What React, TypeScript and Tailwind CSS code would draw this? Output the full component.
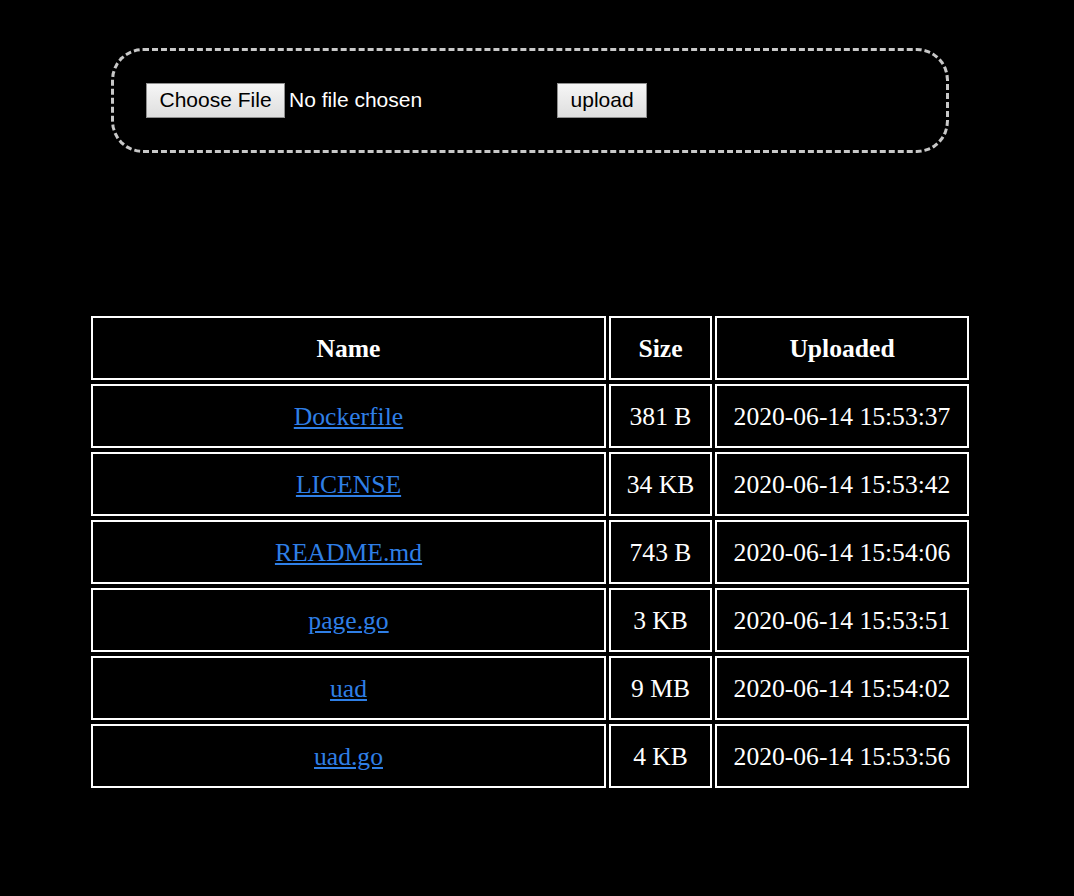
import React from "react";

type FileRow = { name: string; size: string; uploaded: string };

const files: FileRow[] = [
  { name: "Dockerfile", size: "381 B", uploaded: "2020-06-14 15:53:37" },
  { name: "LICENSE", size: "34 KB", uploaded: "2020-06-14 15:53:42" },
  { name: "README.md", size: "743 B", uploaded: "2020-06-14 15:54:06" },
  { name: "page.go", size: "3 KB", uploaded: "2020-06-14 15:53:51" },
  { name: "uad", size: "9 MB", uploaded: "2020-06-14 15:54:02" },
  { name: "uad.go", size: "4 KB", uploaded: "2020-06-14 15:53:56" },
];

const cell =
  "border-2 border-white pt-[16px] pb-[14px] px-0 text-center leading-[30px] align-middle";

const btn =
  "h-[35px] border border-[#8f8f8f] bg-gradient-to-b from-[#f6f6f6] to-[#dedede] px-[12.5px] pb-[2px] text-[21px] leading-[30px] text-black";

export default function App() {
  return (
    <div className="min-h-[896px] bg-black text-white">
      {/* UPLOAD */}
      <div className="pt-[48px] pl-[111px]">
        <form
          className="flex w-[838px] items-center rounded-[32px] border-[3px] border-dashed border-[#c8c8c8] p-[32px]"
          style={{ fontFamily: '"Liberation Sans", Arial, sans-serif' }}
        >
          <button type="button" className={btn}>
            Choose File
          </button>
          <span className="ml-[4px] mb-[2px] w-[268px] text-[21px] leading-[33px] text-white">
            No file chosen
          </span>
          <button type="button" className={btn}>
            upload
          </button>
        </form>
      </div>

      {/* LIST */}
      <div className="pt-[159px] pl-[88px]">
        <table
          className="border-separate border-spacing-x-[3px] border-spacing-y-[4px] text-[25.6px]"
          style={{ fontFamily: '"Liberation Serif", "Times New Roman", serif' }}
        >
          <thead>
            <tr>
              <th className={`${cell} w-[515px] font-bold`}>Name</th>
              <th className={`${cell} w-[103px] font-bold`}>Size</th>
              <th className={`${cell} w-[254px] font-bold`}>Uploaded</th>
            </tr>
          </thead>
          <tbody>
            {files.map((f) => (
              <tr key={f.name}>
                <td className={cell}>
                  <a href="#" className="text-[#2f7fe6] underline">
                    {f.name}
                  </a>
                </td>
                <td className={cell}>{f.size}</td>
                <td className={cell}>{f.uploaded}</td>
              </tr>
            ))}
          </tbody>
        </table>
      </div>
    </div>
  );
}
